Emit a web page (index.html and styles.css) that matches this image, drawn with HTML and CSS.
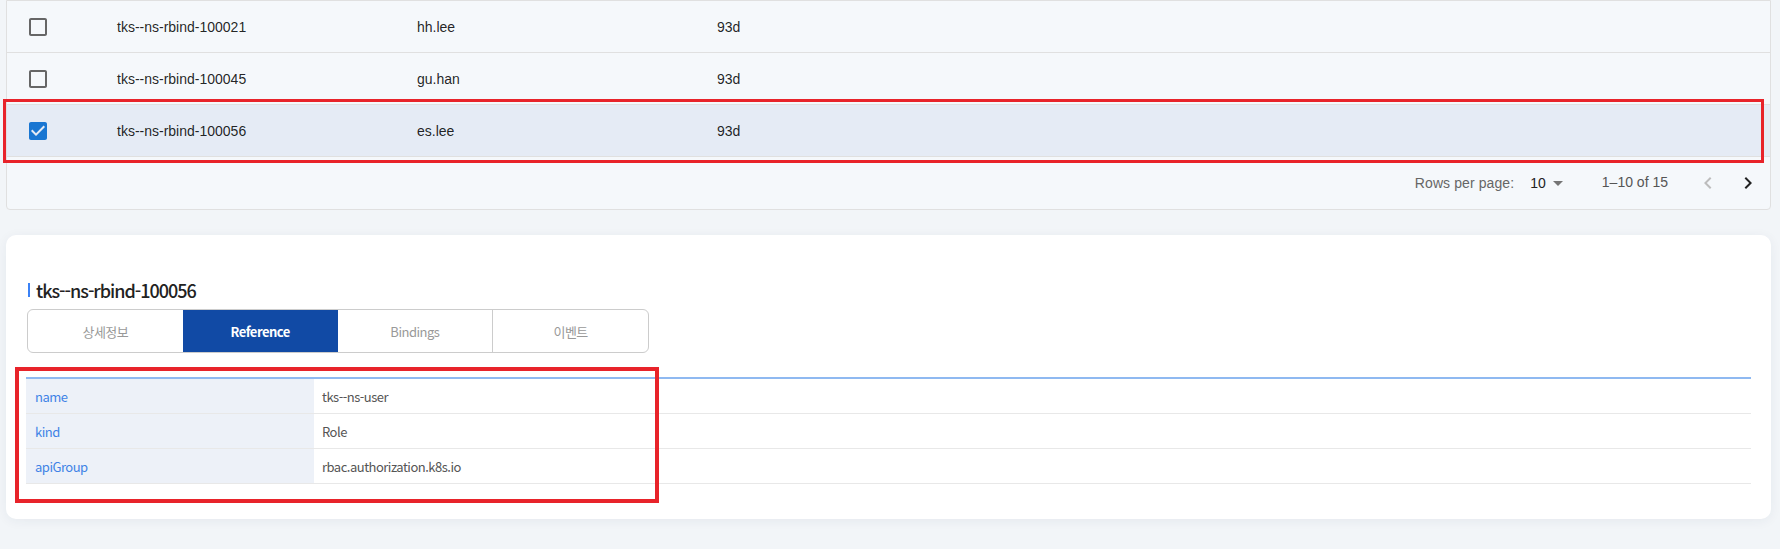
FILE: index.html
```html
<!DOCTYPE html>
<html lang="ko">
<head>
<meta charset="utf-8">
<title>RoleBindings</title>
<link rel="stylesheet" href="styles.css">
</head>
<body>
<div class="page">
  <section class="list">
    <div class="row">
      <div class="cell check"><svg viewBox="0 0 24 24" width="24" height="24"><path fill="#666" d="M19 5v14H5V5h14m0-2H5c-1.1 0-2 .9-2 2v14c0 1.1.9 2 2 2h14c1.1 0 2-.9 2-2V5c0-1.1-.9-2-2-2z"/></svg></div>
      <div class="cell">tks--ns-rbind-100021</div>
      <div class="cell">hh.lee</div>
      <div class="cell">93d</div>
    </div>
    <div class="row">
      <div class="cell check"><svg viewBox="0 0 24 24" width="24" height="24"><path fill="#666" d="M19 5v14H5V5h14m0-2H5c-1.1 0-2 .9-2 2v14c0 1.1.9 2 2 2h14c1.1 0 2-.9 2-2V5c0-1.1-.9-2-2-2z"/></svg></div>
      <div class="cell">tks--ns-rbind-100045</div>
      <div class="cell">gu.han</div>
      <div class="cell">93d</div>
    </div>
    <div class="row selected">
      <div class="cell check"><svg viewBox="0 0 24 24" width="24" height="24"><path fill="#1976d2" d="M19 3H5c-1.11 0-2 .9-2 2v14c0 1.1.89 2 2 2h14c1.11 0 2-.9 2-2V5c0-1.1-.89-2-2-2zm-9 14l-5-5 1.41-1.41L10 14.17l7.59-7.59L19 8l-9 9z"/></svg></div>
      <div class="cell">tks--ns-rbind-100056</div>
      <div class="cell">es.lee</div>
      <div class="cell">93d</div>
    </div>
    <div class="pager">
      <span class="pager-label">Rows per page:</span>
      <span class="pager-select">10<svg viewBox="0 0 24 24" width="24" height="24"><path fill="#757575" d="M7 10l5 5 5-5z"/></svg></span>
      <span class="pager-rows">1–10 of 15</span>
      <span class="pager-actions">
        <span class="pager-btn"><svg viewBox="0 0 24 24" width="24" height="24"><path fill="#bdbdbd" d="M15.41 16.59 10.83 12l4.58-4.59L14 6l-6 6 6 6 1.41-1.41z"/></svg></span>
        <span class="pager-btn"><svg viewBox="0 0 24 24" width="24" height="24"><path fill="#222" d="M8.59 16.59 13.17 12 8.59 7.41 10 6l6 6-6 6-1.41-1.41z"/></svg></span>
      </span>
    </div>
  </section>

  <section class="detail">
    <h2 class="title"><span class="title-bar"></span>tks--ns-rbind-100056</h2>
    <div class="tabs">
      <div class="tab">상세정보</div>
      <div class="tab active">Reference</div>
      <div class="tab">Bindings</div>
      <div class="tab">이벤트</div>
    </div>
    <table class="kv">
      <tr><td class="kv-key">name</td><td class="kv-val">tks--ns-user</td></tr>
      <tr><td class="kv-key">kind</td><td class="kv-val">Role</td></tr>
      <tr><td class="kv-key">apiGroup</td><td class="kv-val">rbac.authorization.k8s.io</td></tr>
    </table>
  </section>

  <div class="mark mark-row"></div>
  <div class="mark mark-kv"></div>
</div>
</body>
</html>
```

FILE: styles.css
```css
html, body {
  margin: 0;
  padding: 0;
}

body {
  background: #f2f5f8;
  font-family: "Liberation Sans", Arial, sans-serif;
}

.page {
  position: relative;
  padding: 0 9px 0 6px;
  height: 549px;
  box-sizing: border-box;
  overflow: hidden;
}

/* ---------- list table ---------- */
.list {
  background: #f5f8fb;
  border: 1px solid #e0e0e0;
  border-radius: 0 0 4px 4px;
}

.row {
  display: grid;
  grid-template-columns: 110px 300px 300px 1fr;
  align-items: center;
  height: 51px;
  border-bottom: 1px solid #e0e0e0;
  font-size: 14px;
  color: rgba(0, 0, 0, 0.87);
}

.row.selected {
  background: #e5ebf5;
}

.check {
  display: flex;
  padding-left: 19px;
}

.pager {
  display: flex;
  justify-content: flex-end;
  align-items: center;
  height: 52px;
  padding-right: 2px;
  font-size: 14px;
}

.pager-label {
  color: #666;
  letter-spacing: 0.1px;
}

.pager-select {
  display: flex;
  align-items: center;
  margin: 0 32px 0 8px;
  padding-left: 8px;
  color: #222;
}

.pager-rows {
  color: #555;
  margin-top: -3px;
}

.pager-actions {
  display: flex;
  margin-left: 20px;
}

.pager-btn {
  display: flex;
  padding: 8px;
}

/* ---------- detail card ---------- */
.detail {
  margin-top: 25px;
  background: #fff;
  border-radius: 10px;
  padding: 42px 20px 35px;
  box-shadow: 0 2px 12px rgba(30, 50, 90, 0.06);
}

.title {
  display: flex;
  align-items: center;
  margin: 0 0 6px 2px;
  font-family: "Noto Sans CJK KR", "Noto Sans", sans-serif;
  font-weight: 500;
  font-size: 18px;
  line-height: 26px;
  letter-spacing: -1px;
  color: #222;
}

.title-bar {
  width: 2px;
  height: 14px;
  background: #3b82f6;
  margin-right: 6px;
}

.tabs {
  display: flex;
  box-sizing: border-box;
  width: 622px;
  height: 44px;
  margin-left: 1px;
  border: 1px solid #ccc;
  border-radius: 6px;
  overflow: hidden;
  font-family: "Noto Sans CJK KR", "Noto Sans", sans-serif;
  font-size: 13px;
  letter-spacing: -0.5px;
}

.tab {
  flex: 1;
  display: flex;
  align-items: center;
  justify-content: center;
  color: #999;
  border-left: 1px solid #ccc;
}

.tab:first-child {
  border-left: none;
}

.tab.active {
  background: #114aa5;
  color: #fff;
  font-weight: 700;
  border-left: none;
}

.tab.active + .tab {
  border-left: none;
}

.kv {
  width: 100%;
  margin-top: 24px;
  border-collapse: collapse;
  border-top: 2px solid #8fb9f1;
  font-family: "Noto Sans CJK KR", "Noto Sans", sans-serif;
  font-size: 13px;
  letter-spacing: -0.5px;
}

.kv td {
  height: 34px;
  padding: 0;
  border-bottom: 1px solid #e8e8e8;
  vertical-align: middle;
}

.kv-key {
  width: 288px;
  box-sizing: border-box;
  padding-left: 9px !important;
  background: #edf1f8;
  color: #3f83e6;
}

.kv-val {
  padding-left: 8px !important;
  color: #555;
}

/* ---------- annotation marks ---------- */
.mark {
  position: absolute;
  box-sizing: border-box;
  border: 3px solid #e8232a;
  pointer-events: none;
}

.mark-row {
  left: 3px;
  top: 99px;
  width: 1761px;
  height: 64px;
}

.mark-kv {
  left: 15px;
  top: 367px;
  width: 644px;
  height: 136px;
  border-width: 4px;
}
```
